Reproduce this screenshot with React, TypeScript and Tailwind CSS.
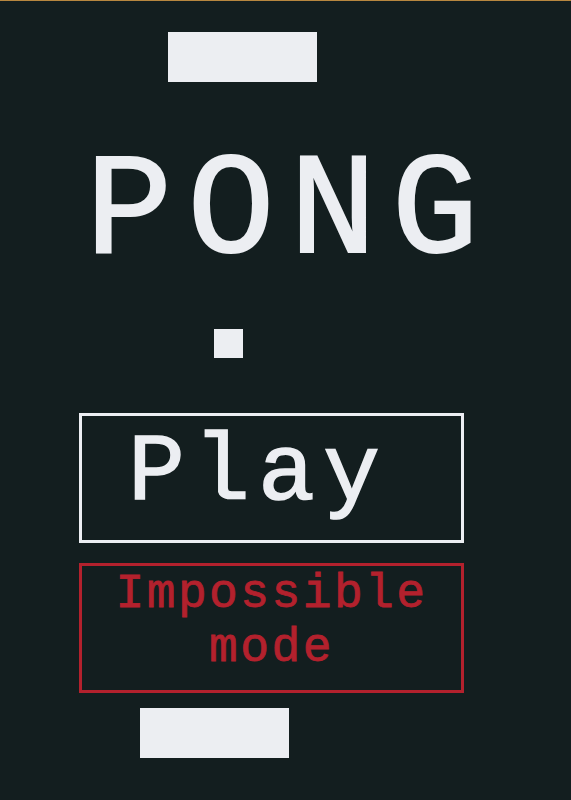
import React from "react";

const mono = { fontFamily: '"Courier New", "Liberation Mono", monospace' };

const Paddle: React.FC<{ className: string }> = ({ className }) => (
  <div className={`h-[50px] w-[149px] bg-[#eceef2] ${className}`} />
);

export default function App() {
  return (
    <div
      className="flex h-[800px] w-full flex-col overflow-hidden border-t border-[#b8873f] bg-[#131e1f] text-[#eceef2]"
      style={mono}
    >
      <Paddle className="ml-[168px] mt-[31px]" />

      <h1 className="mt-[59px] pl-[8px] text-center text-[145px] leading-none tracking-[15px] [-webkit-text-stroke:2px_#eceef2]">
        PONG
      </h1>

      <div className="ml-[214px] mt-[43px] h-[29px] w-[29px] bg-[#eceef2]" />

      <button className="ml-[79px] mt-[55px] flex h-[130px] w-[385px] items-center border-[3px] border-[#eceef2] pb-[8px] pl-[46px] text-[95px] leading-none tracking-[8px] [-webkit-text-stroke:1.5px_#eceef2]">
        Play
      </button>

      <button className="ml-[79px] mt-5 flex h-[130px] w-[385px] items-start justify-center border-[3px] border-[#b3212d] pt-[1px] text-center text-[48px] leading-[54px] tracking-[2.4px] text-[#b3212d] [-webkit-text-stroke:0.8px_#b3212d]">
        Impossible mode
      </button>

      <Paddle className="ml-[140px] mt-[15px] w-[148px]" />
    </div>
  );
}
